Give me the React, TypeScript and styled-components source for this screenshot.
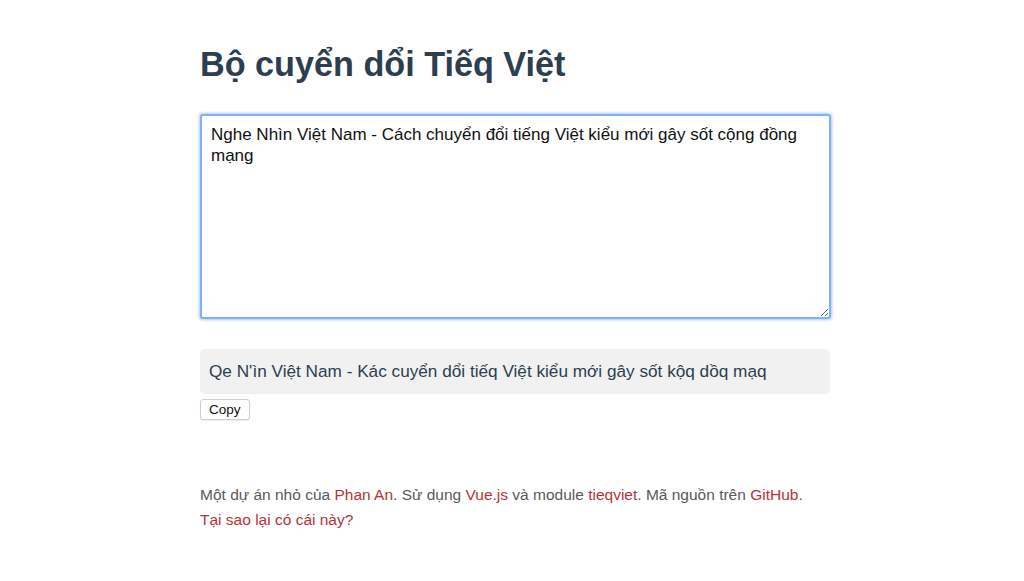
import React from "react";
import styled, { createGlobalStyle } from "styled-components";

const Global = createGlobalStyle`
  html, body { margin: 0; padding: 0; background: #fff; }
  body { font-family: "Liberation Sans", Arial, sans-serif; color: #2c3e50; }
`;

const Page = styled.div`
  width: 630px;
  margin: 0 auto;
  padding: 40px 0 0 6px;
  display: flex;
  flex-direction: column;
`;

const Title = styled.h1`
  margin: 0 0 26px;
  font-size: 34.2px;
  line-height: 48px;
  font-weight: 700;
  color: #2c3e50;
`;

const Input = styled.textarea`
  box-sizing: border-box;
  width: 631px;
  height: 205px;
  margin: 0;
  padding: 8px 9px 9px;
  font-family: "Liberation Sans", Arial, sans-serif;
  font-size: 17px;
  line-height: 21px;
  color: #111;
  border: 2px solid #7fb2f2;
  border-radius: 3px;
  box-shadow: 0 0 3px 1px #a9cdf7;
  outline: none;
  resize: both;
`;

const Output = styled.div`
  margin-top: 30px;
  box-sizing: border-box;
  height: 45px;
  padding: 0 9px;
  display: flex;
  align-items: center;
  background: #f1f1f1;
  border-radius: 5px;
  font-size: 17.2px;
  color: #2c3e50;
`;

const CopyButton = styled.button`
  align-self: flex-start;
  margin-top: 5px;
  height: 21px;
  padding: 0 8px;
  background: #fff;
  border: 1px solid #cfcfcf;
  border-radius: 3px;
  font-family: "Liberation Sans", Arial, sans-serif;
  font-size: 13.5px;
  color: #111;
  box-shadow: 0 1px 1px rgba(0,0,0,0.08);
`;

const Footer = styled.footer`
  margin-top: 62px;
  font-size: 15.5px;
  line-height: 25px;
  color: #595959;
`;

const Link = styled.a`
  color: #b7323a;
  text-decoration: none;
`;

export default function App() {
  return (
    <>
      <Global />
      <Page>
        <Title>Bộ cuyển dổi Tiếq Việt</Title>
        <Input
          spellCheck={false}
          defaultValue="Nghe Nhìn Việt Nam - Cách chuyển đổi tiếng Việt kiểu mới gây sốt cộng đồng mạng"
        />
        <Output>Qe N'ìn Việt Nam - Kác cuyển dổi tiếq Việt kiểu mới gây sốt kộq dồq mạq</Output>
        <CopyButton>Copy</CopyButton>
        <Footer>
          Một dự án nhỏ của <Link href="#">Phan An</Link>. Sử dụng <Link href="#">Vue.js</Link> và module{" "}
          <Link href="#">tieqviet</Link>. Mã nguồn trên <Link href="#">GitHub</Link>.
          <br />
          <Link href="#">Tại sao lại có cái này?</Link>
        </Footer>
      </Page>
    </>
  );
}
